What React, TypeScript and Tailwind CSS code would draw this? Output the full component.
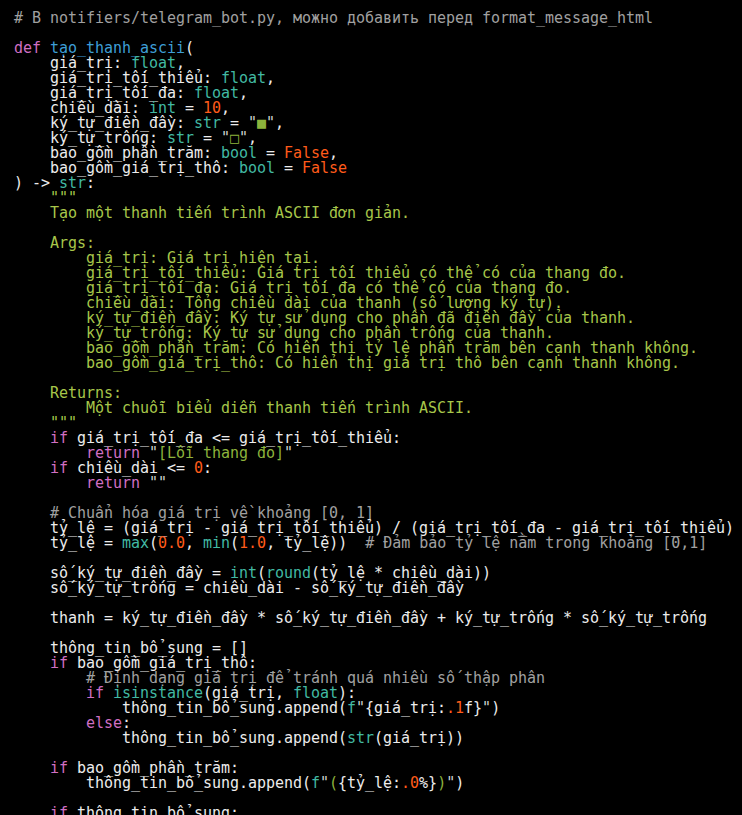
type Tok = [keyof typeof tone, string]

const tone = {
  t: "text-[#ececec]",
  c: "text-[#a0a0a0]",
  k: "text-[#d06fc3]",
  f: "text-[#3e9ed6]",
  b: "text-[#42b9a3]",
  n: "text-[#ff5b1a]",
  d: "text-[#a7c64a]",
  s: "text-[#8db33c]",
  q: "text-[#d0d0d0]",
}

const lines: Tok[][] = [
  [["c", "# В notifiers/telegram_bot.py, можно добавить перед format_message_html"]],
  [],
  [["k", "def "], ["f", "tạo_thanh_ascii"], ["t", "("]],
  [["t", "    giá_trị: "], ["b", "float"], ["t", ","]],
  [["t", "    giá_trị_tối_thiểu: "], ["b", "float"], ["t", ","]],
  [["t", "    giá_trị_tối_đa: "], ["b", "float"], ["t", ","]],
  [["t", "    chiều_dài: "], ["b", "int"], ["t", " = "], ["n", "10"], ["t", ","]],
  [["t", "    ký_tự_điền_đầy: "], ["b", "str"], ["t", " = "], ["q", "\""], ["s", "■"], ["q", "\""], ["t", ","]],
  [["t", "    ký_tự_trống: "], ["b", "str"], ["t", " = "], ["q", "\""], ["s", "□"], ["q", "\""], ["t", ","]],
  [["t", "    bao_gồm_phần_trăm: "], ["b", "bool"], ["t", " = "], ["n", "False"], ["t", ","]],
  [["t", "    bao_gồm_giá_trị_thô: "], ["b", "bool"], ["t", " = "], ["n", "False"]],
  [["t", ") -> "], ["b", "str"], ["t", ":"]],
  [["d", "    \"\"\""]],
  [["d", "    Tạo một thanh tiến trình ASCII đơn giản."]],
  [],
  [["d", "    Args:"]],
  [["d", "        giá_trị: Giá trị hiện tại."]],
  [["d", "        giá_trị_tối_thiểu: Giá trị tối thiểu có thể có của thang đo."]],
  [["d", "        giá_trị_tối_đa: Giá trị tối đa có thể có của thang đo."]],
  [["d", "        chiều_dài: Tổng chiều dài của thanh (số lượng ký tự)."]],
  [["d", "        ký_tự_điền_đầy: Ký tự sử dụng cho phần đã điền đầy của thanh."]],
  [["d", "        ký_tự_trống: Ký tự sử dụng cho phần trống của thanh."]],
  [["d", "        bao_gồm_phần_trăm: Có hiển thị tỷ lệ phần trăm bên cạnh thanh không."]],
  [["d", "        bao_gồm_giá_trị_thô: Có hiển thị giá trị thô bên cạnh thanh không."]],
  [],
  [["d", "    Returns:"]],
  [["d", "        Một chuỗi biểu diễn thanh tiến trình ASCII."]],
  [["d", "    \"\"\""]],
  [["k", "    if "], ["t", "giá_trị_tối_đa <= giá_trị_tối_thiểu:"]],
  [["k", "        return "], ["q", "\""], ["s", "[Lỗi thang đo]"], ["q", "\""]],
  [["k", "    if "], ["t", "chiều_dài <= "], ["n", "0"], ["t", ":"]],
  [["k", "        return "], ["q", "\"\""]],
  [],
  [["c", "    # Chuẩn hóa giá trị về khoảng [0, 1]"]],
  [["t", "    tỷ_lệ = (giá_trị - giá_trị_tối_thiểu) / (giá_trị_tối_đa - giá_trị_tối_thiểu)"]],
  [
    ["t", "    tỷ_lệ = "], ["b", "max"], ["t", "("], ["n", "0.0"], ["t", ", "], ["b", "min"], ["t", "("],
    ["n", "1.0"], ["t", ", tỷ_lệ))  "], ["c", "# Đảm bảo tỷ lệ nằm trong khoảng [0,1]"],
  ],
  [],
  [["t", "    số_ký_tự_điền_đầy = "], ["b", "int"], ["t", "("], ["b", "round"], ["t", "(tỷ_lệ * chiều_dài))"]],
  [["t", "    số_ký_tự_trống = chiều_dài - số_ký_tự_điền_đầy"]],
  [],
  [["t", "    thanh = ký_tự_điền_đầy * số_ký_tự_điền_đầy + ký_tự_trống * số_ký_tự_trống"]],
  [],
  [["t", "    thông_tin_bổ_sung = []"]],
  [["k", "    if "], ["t", "bao_gồm_giá_trị_thô:"]],
  [["c", "        # Định dạng giá trị để tránh quá nhiều số thập phân"]],
  [["k", "        if "], ["b", "isinstance"], ["t", "(giá_trị, "], ["b", "float"], ["t", "):"]],
  [
    ["t", "            thông_tin_bổ_sung.append("], ["b", "f"], ["q", "\""], ["t", "{giá_trị:"],
    ["n", ".1"], ["t", "f}"], ["q", "\""], ["t", ")"],
  ],
  [["k", "        else"], ["t", ":"]],
  [["t", "            thông_tin_bổ_sung.append("], ["b", "str"], ["t", "(giá_trị))"]],
  [],
  [["k", "    if "], ["t", "bao_gồm_phần_trăm:"]],
  [
    ["t", "        thông_tin_bổ_sung.append("], ["b", "f"], ["q", "\""], ["s", "("], ["t", "{tỷ_lệ:"],
    ["n", ".0"], ["t", "%}"], ["s", ")"], ["q", "\""], ["t", ")"],
  ],
  [],
  [["k", "    if "], ["t", "thông_tin_bổ_sung:"]],
]

export default function App() {
  return (
    <main className="h-[815px] w-[742px] overflow-hidden bg-black pl-[14px] pt-[11px]">
      <pre className="font-['DejaVu_Sans_Mono',monospace] text-[15px] leading-[15px] tracking-[-0.03px] whitespace-pre">
        {lines.map((line, i) => (
          <div key={i} className="h-[15px]">
            {line.map(([kind, text], j) => (
              <span key={j} className={tone[kind]}>
                {text}
              </span>
            ))}
          </div>
        ))}
      </pre>
    </main>
  )
}
